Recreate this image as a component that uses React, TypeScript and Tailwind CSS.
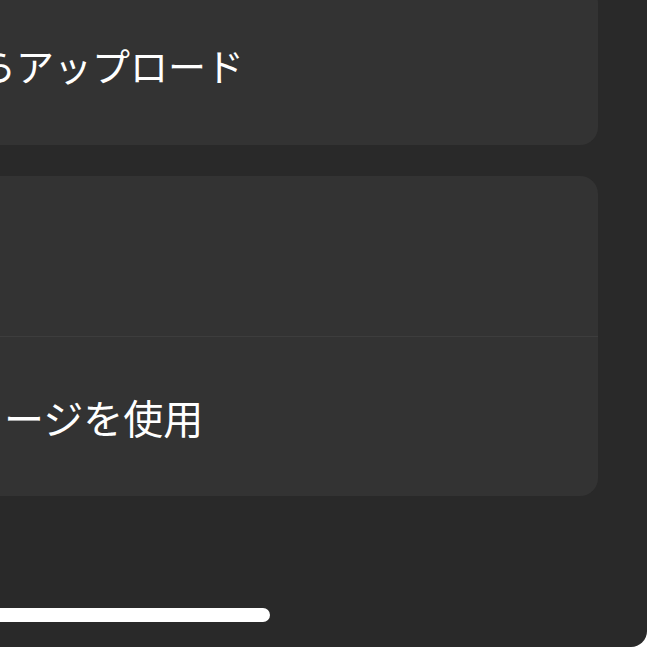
export default function App() {
  return (
    <div className="w-[647px] h-[647px] bg-white overflow-hidden">
      <div
        className="relative w-full h-full bg-[#292929] rounded-br-[16px] overflow-hidden"
        style={{ fontFamily: '"Noto Sans CJK JP", "Noto Sans", sans-serif' }}
      >
        <div className="flex flex-col ml-[-400px] mr-[49px] mt-[-15px] gap-[31px]">
          {/* Upload card */}
          <div className="bg-[#333333] rounded-[18px]">
            <div className="h-[160px] flex items-center pl-[74px] text-[38px] leading-none text-white whitespace-nowrap">
              写真ライブラリからアップロード
            </div>
          </div>

          {/* Options card */}
          <div className="bg-[#333333] rounded-[18px] overflow-hidden">
            <div className="h-[160px] flex items-center pl-[74px] text-[38px] leading-none text-white whitespace-nowrap">
              写真を撮る
            </div>
            <div className="h-px bg-[#3d3d3d]" />
            <div className="h-[159px] flex items-center pl-[324px] text-[40px] leading-none text-white whitespace-nowrap">
              イメージを使用
            </div>
          </div>
        </div>

        {/* Home indicator */}
        <div className="ml-[-300px] mt-[112px] w-[570px] h-[14px] rounded-full bg-white" />
      </div>
    </div>
  );
}
